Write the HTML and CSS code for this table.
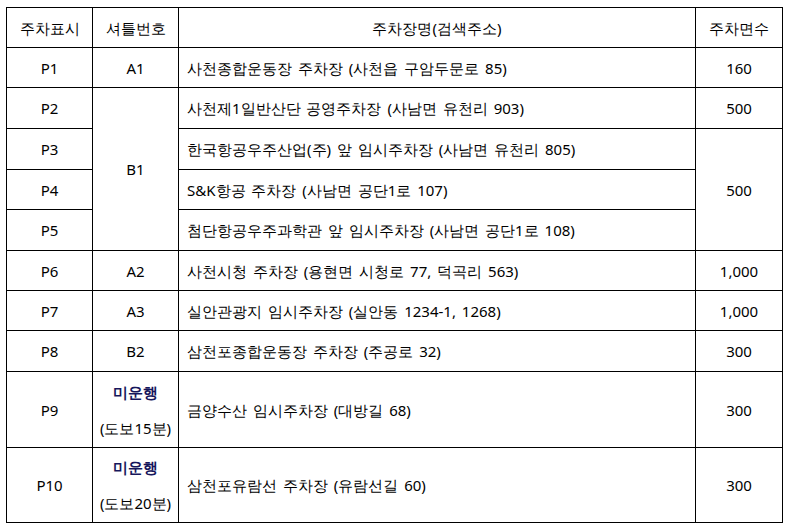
FILE: index.html
```
<!DOCTYPE html>
<html lang="ko">
<head>
<meta charset="utf-8">
<link rel="stylesheet" href="styles.css">
</head>
<body>
<table class="park">
  <colgroup>
    <col class="c1"><col class="c2"><col class="c3"><col class="c4">
  </colgroup>
  <thead>
    <tr class="h40">
      <th>주차표시</th><th>셔틀번호</th><th>주차장명(검색주소)</th><th>주차면수</th>
    </tr>
  </thead>
  <tbody>
    <tr class="h40"><td>P1</td><td>A1</td><td class="name">사천종합운동장 주차장 (사천읍 구암두문로 85)</td><td>160</td></tr>
    <tr class="h41"><td>P2</td><td rowspan="4">B1</td><td class="name">사천제1일반산단 공영주차장 (사남면 유천리 903)</td><td>500</td></tr>
    <tr class="h41"><td>P3</td><td class="name">한국항공우주산업(주) 앞 임시주차장 (사남면 유천리 805)</td><td rowspan="3">500</td></tr>
    <tr class="h40"><td>P4</td><td class="name">S&amp;K항공 주차장 (사남면 공단1로 107)</td></tr>
    <tr class="h41"><td>P5</td><td class="name">첨단항공우주과학관 앞 임시주차장 (사남면 공단1로 108)</td></tr>
    <tr class="h40"><td>P6</td><td>A2</td><td class="name">사천시청 주차장 (용현면 시청로 77, 덕곡리 563)</td><td>1,000</td></tr>
    <tr class="h40"><td>P7</td><td>A3</td><td class="name">실안관광지 임시주차장 (실안동 1234-1, 1268)</td><td>1,000</td></tr>
    <tr class="h41"><td>P8</td><td>B2</td><td class="name">삼천포종합운동장 주차장 (주공로 32)</td><td>300</td></tr>
    <tr class="h76"><td>P9</td><td><div class="stop">미운행</div><div class="walk">(도보15분)</div></td><td class="name">금양수산 임시주차장 (대방길 68)</td><td>300</td></tr>
    <tr class="h75"><td>P10</td><td><div class="stop">미운행</div><div class="walk">(도보20분)</div></td><td class="name">삼천포유람선 주차장 (유람선길 60)</td><td>300</td></tr>
  </tbody>
</table>
</body>
</html>
```
FILE: styles.css
```
html, body {
  margin: 0;
  padding: 0;
  background: #ffffff;
}
body {
  padding: 7px 0 0 6px;
  font-family: "Noto Sans", sans-serif;
  font-size: 15px;
  color: #000000;
}
.park {
  border-collapse: collapse;
  table-layout: fixed;
  width: 777px;
}
.c1 { width: 86px; }
.c2 { width: 86px; }
.c3 { width: 517px; }
.c4 { width: 87px; }
.park th,
.park td {
  border: 1px solid #000000;
  padding: 0;
  text-align: center;
  vertical-align: middle;
  font-weight: normal;
  line-height: 18px;
  white-space: nowrap;
}
.park td.name {
  text-align: left;
  padding-left: 8px;
  word-spacing: 2px;
}
.h40 { height: 40px; }
.h41 { height: 41px; }
.h76 { height: 76px; }
.h75 { height: 75px; }
.stop {
  font-weight: bold;
  color: #16165c;
  line-height: 36px;
}
.walk {
  line-height: 36px;
}
```
